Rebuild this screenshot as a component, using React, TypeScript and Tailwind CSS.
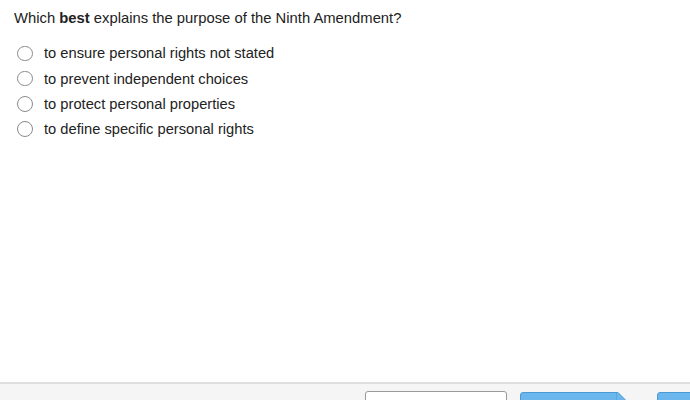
import React, { useState } from 'react';

const options = [
  'to ensure personal rights not stated',
  'to prevent independent choices',
  'to protect personal properties',
  'to define specific personal rights',
];

export default function App() {
  const [selected, setSelected] = useState<number | null>(null);

  return (
    <div
      className="w-[690px] h-[400px] bg-white flex flex-col overflow-hidden text-[#222]"
      style={{ fontFamily: '"Liberation Sans", Arial, sans-serif' }}
    >
      <div className="flex-1 pl-[14px] pt-[9px]">
        <p className="text-[14.8px] leading-[19px]">
          Which <b>best</b> explains the purpose of the Ninth Amendment?
        </p>
        <div className="mt-[16px] flex flex-col gap-[6.8px] pl-[3px]">
          {options.map((opt, i) => (
            <label key={i} className="flex items-center h-[18.5px] cursor-pointer">
              <input
                type="radio"
                name="answer"
                checked={selected === i}
                onChange={() => setSelected(i)}
                className="sr-only"
              />
              <span className="w-[15.5px] h-[15.5px] rounded-full border-[1.5px] border-[#8a8a8a] bg-white flex items-center justify-center">
                {selected === i && <span className="w-[7px] h-[7px] rounded-full bg-[#2d7dd2]" />}
              </span>
              <span className="ml-[11.5px] text-[14.7px]">{opt}</span>
            </label>
          ))}
        </div>
      </div>

      {/* footer toolbar, buttons run past the right edge */}
      <div className="h-[18px] border-t-2 border-[#dedede] bg-[#f5f5f5] flex items-start">
        <div className="shrink-0 ml-[365px] mt-[7px] w-[142px] h-[30px] bg-white border border-[#9a9a9a] rounded-[3px]" />
        <div className="shrink-0 ml-[13px] mt-[8px] relative w-[106px] h-[30px]">
          <div className="absolute inset-y-0 left-0 right-[8px] bg-[#6bb6ec] border border-[#4a9ad6] rounded-l-[3px]" />
          <svg className="absolute right-0 top-0" width="10" height="30" viewBox="0 0 10 30">
            <path d="M0 0.5 L2 0.5 L9.5 8 L9.5 30 L0 30 Z" fill="#6bb6ec" stroke="#4a9ad6" />
          </svg>
        </div>
        <div className="shrink-0 ml-[31px] mt-[8px] w-[40px] h-[30px] bg-[#6bb6ec] border border-[#4a9ad6] rounded-l-[3px]" />
      </div>
    </div>
  );
}
